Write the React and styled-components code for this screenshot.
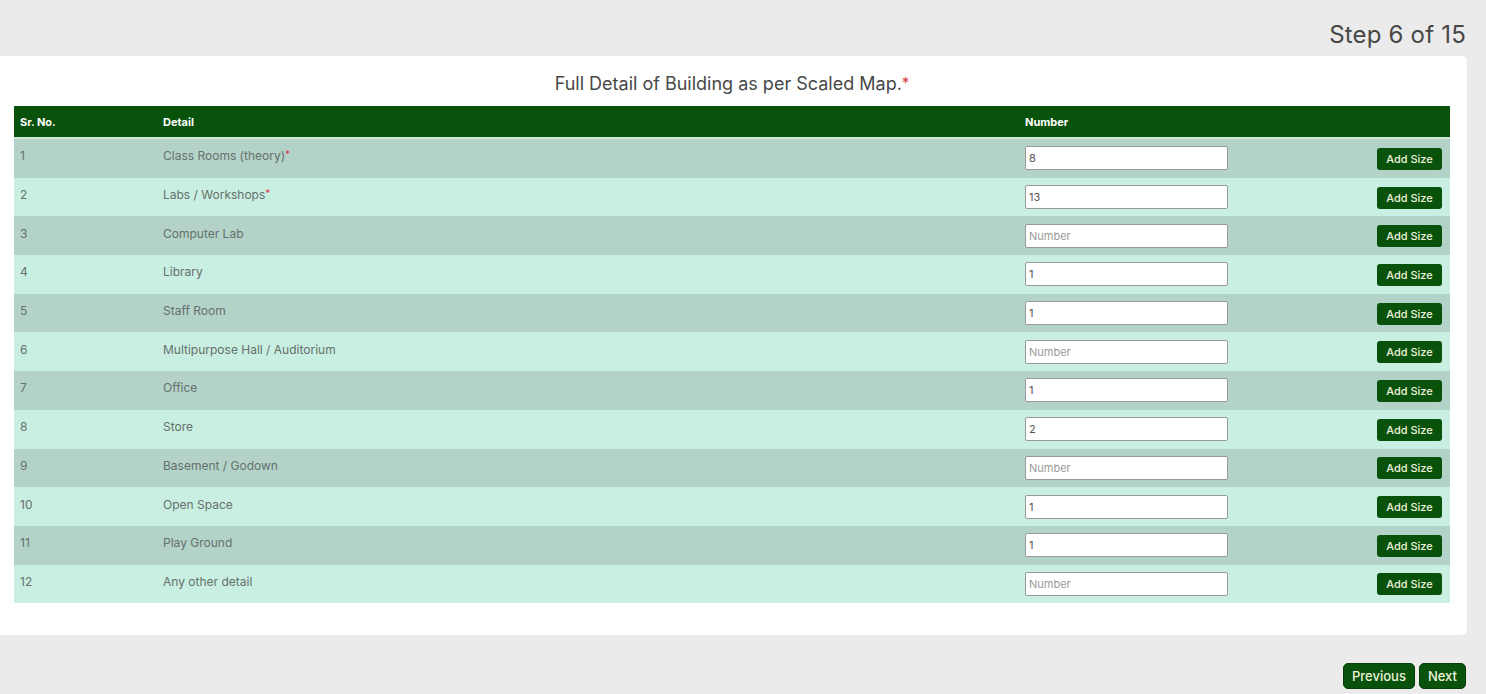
import React from "react";
import styled, { createGlobalStyle } from "styled-components";

const rows = [
  { no: 1, detail: "Class Rooms (theory)", required: true, value: "8" },
  { no: 2, detail: "Labs / Workshops", required: true, value: "13" },
  { no: 3, detail: "Computer Lab", value: "" },
  { no: 4, detail: "Library", value: "1" },
  { no: 5, detail: "Staff Room", value: "1" },
  { no: 6, detail: "Multipurpose Hall / Auditorium", value: "" },
  { no: 7, detail: "Office", value: "1" },
  { no: 8, detail: "Store", value: "2" },
  { no: 9, detail: "Basement / Godown", value: "" },
  { no: 10, detail: "Open Space", value: "1" },
  { no: 11, detail: "Play Ground", value: "1" },
  { no: 12, detail: "Any other detail", value: "" },
];

const App = () => {
  return (
    <>
      <GlobalStyle />
      <Page>
        <TopBar>
          <StepText>Step 6 of 15</StepText>
        </TopBar>

        <Card>
          <Title>
            Full Detail of Building as per Scaled Map.<Star>*</Star>
          </Title>

          <Table>
            <HeaderRow>
              <HeadCell>Sr. No.</HeadCell>
              <HeadCell>Detail</HeadCell>
              <HeadCell>Number</HeadCell>
              <HeadCell />
            </HeaderRow>

            {rows.map((row, i) => (
              <Row key={row.no} $odd={i % 2 === 0}>
                <Cell>{row.no}</Cell>
                <Cell>
                  {row.detail}
                  {row.required && <SmallStar>*</SmallStar>}
                </Cell>
                <InputCell>
                  <NumberInput defaultValue={row.value} placeholder="Number" />
                </InputCell>
                <ButtonCell>
                  <AddButton>Add Size</AddButton>
                </ButtonCell>
              </Row>
            ))}
          </Table>
        </Card>

        <Footer>
          <NavButton>Previous</NavButton>
          <NavButton>Next</NavButton>
        </Footer>
      </Page>
    </>
  );
};

const GlobalStyle = createGlobalStyle`
  body {
    margin: 0;
    background: #ebebeb;
    font-family: Inter, "Noto Sans", sans-serif;
  }
`;

const Page = styled.div`
  width: 1486px;
  height: 694px;
  display: flex;
  flex-direction: column;
`;

const TopBar = styled.div`
  height: 56px;
  display: flex;
  align-items: flex-end;
  justify-content: flex-end;
  padding-right: 20px;
  box-sizing: border-box;
`;

const StepText = styled.div`
  font-size: 24px;
  color: #474747;
  line-height: 1;
  padding-bottom: 9px;
  letter-spacing: 0.2px;
`;

const Card = styled.div`
  margin-right: 19px;
  background: #fff;
  border-radius: 0 5px 5px 0;
  padding: 0 17px 32px 14px;
  box-shadow: 0 0 3px rgba(0, 0, 0, 0.04);
`;

const Title = styled.div`
  height: 50px;
  display: flex;
  align-items: center;
  justify-content: center;
  font-size: 18px;
  color: #474747;
  padding-top: 4px;
  box-sizing: border-box;
`;

const Star = styled.span`
  color: #e0394b;
  font-size: 15px;
  align-self: flex-start;
  margin-top: 13px;
`;

const SmallStar = styled.span`
  color: #e0394b;
  font-size: 10px;
  vertical-align: top;
`;

const Table = styled.div`
  display: flex;
  flex-direction: column;
`;

const HeaderRow = styled.div`
  display: grid;
  grid-template-columns: 149px 862px 203px 1fr;
  height: 33px;
  align-items: center;
  background: #08520c;
  border-bottom: 2px solid #cfe6d9;
  box-sizing: border-box;
`;

const HeadCell = styled.div`
  color: #fff;
  font-size: 11px;
  font-weight: 700;
  padding-left: 6px;

  &:nth-child(2),
  &:nth-child(3) {
    padding-left: 0;
  }
`;

const Row = styled.div`
  display: grid;
  grid-template-columns: 149px 862px 203px 1fr;
  height: 38.7px;
  align-items: center;
  background: ${(p) => (p.$odd ? "#b3d3c8" : "#c8efe1")};
`;

const Cell = styled.div`
  color: #66706c;
  font-size: 12px;
  padding-left: 6px;
  margin-top: -5px;

  &:nth-child(2) {
    padding-left: 0;
  }
`;

const InputCell = styled.div`
  display: flex;
`;

const NumberInput = styled.input`
  width: 203px;
  height: 24px;
  box-sizing: border-box;
  border: 1px solid #9a9a9a;
  border-radius: 2px;
  background: #fff;
  padding: 0 3px;
  font-family: Inter, "Noto Sans", sans-serif;
  font-size: 11px;
  color: #555;
  outline: none;

  &::placeholder {
    color: #9a9a9a;
  }
`;

const ButtonCell = styled.div`
  display: flex;
  justify-content: flex-end;
  padding-right: 8px;
`;

const AddButton = styled.button`
  width: 65px;
  height: 22px;
  margin-top: 1px;
  border: none;
  border-radius: 3px;
  background: #08520c;
  color: #eef3dc;
  font-family: Inter, "Noto Sans", sans-serif;
  font-size: 11px;
  font-weight: 500;
  padding: 0;
  cursor: pointer;
`;

const Footer = styled.div`
  display: flex;
  justify-content: flex-end;
  gap: 4px;
  padding: 28px 20px 0 0;
`;

const NavButton = styled.button`
  height: 26px;
  padding: 0 8px;
  border: 1px solid #063d09;
  border-radius: 5px;
  background: #08520c;
  color: #eef3dc;
  font-family: Inter, "Noto Sans", sans-serif;
  font-size: 13px;
  font-weight: 500;
  cursor: pointer;
`;

export default App;
